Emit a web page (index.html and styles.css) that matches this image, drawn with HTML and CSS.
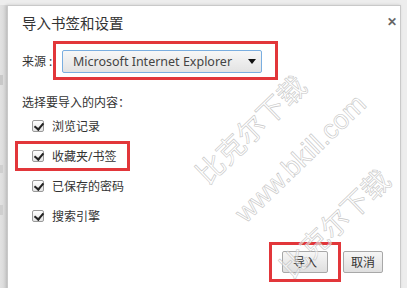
FILE: index.html
```html
<!DOCTYPE html>
<html lang="zh-CN">
<head>
  <meta charset="UTF-8">
  <title>导入书签和设置</title>
  <link rel="stylesheet" href="styles.css">
</head>
<body>

  <div class="backdrop"></div>

  <div class="dialog">
    <span class="close">&#x2715;</span>
    <h1 class="title">导入书签和设置</h1>

    <!-- 来源 -->
    <div class="source">
      <span class="source-label">来源 :</span>
      <div class="mark mark-select">
        <div class="select">
          <span>Microsoft Internet Explorer</span>
          <span class="arrow"></span>
        </div>
      </div>
    </div>

    <p class="section">选择要导入的内容：</p>
    <div class="options">
      <div class="option"><span class="check"></span>浏览记录</div>
      <div class="option mark mark-row"><span class="check"></span>收藏夹/书签</div>
      <div class="option"><span class="check"></span>已保存的密码</div>
      <div class="option"><span class="check"></span>搜索引擎</div>
    </div>

    <div class="actions">
      <div class="mark mark-btn">
        <button type="button">导入</button>
      </div>
      <button type="button" class="cancel">取消</button>
    </div>

    <!-- 水印 -->
    <div class="watermark wm-1">比克尔下载</div>
    <div class="watermark wm-2">www.bkill.com</div>
    <div class="watermark wm-3">比克尔下载</div>
  </div>

</body>
</html>
```

FILE: styles.css
```css
* { box-sizing: border-box; margin: 0; padding: 0; }
body {
  background: #ededed; height: 288px; overflow: hidden; display: flex;
  padding: 5px 6px 0 0;
  font-family: "Noto Sans", "Noto Sans CJK SC", sans-serif; font-size: 12px; color: #333;
}

/* Page behind the dialog */
.backdrop {
  width: 7px;
  background:
    linear-gradient(#c8c8c8, #c8c8c8) 0 70px / 3px 10px no-repeat,
    linear-gradient(#cfcfcf, #cfcfcf) 0 160px / 3px 8px no-repeat,
    linear-gradient(#cfcfcf, #cfcfcf) 0 200px / 3px 10px no-repeat,
    linear-gradient(to right, #e2e2e2, #d6d6d6);
}

/* Dialog */
.dialog {
  flex: 1; height: 300px; background: #fff; border: 1px solid #c9c9c9;
  box-shadow: -1px 0 3px rgba(0,0,0,0.15);
  padding: 7px 17px 0 14px; position: relative; overflow: hidden;
}
.title { font-size: 14.5px; font-weight: normal; line-height: 20px; color: #333; }
.close {
  position: absolute; top: 7px; right: 3px; font-size: 12px; font-weight: bold; color: #666;
}

/* Annotation boxes */
.mark { border: 3px solid #e2363a; }

.source { display: flex; align-items: center; margin-top: 8px; }
.source-label { width: 31px; white-space: nowrap; }
.mark-select { padding: 6px 13px 4px 6px; }
.select {
  width: 200px; height: 23px; border: 1px solid #7aaee0; border-radius: 2px;
  background: linear-gradient(#f7f7f7, #e3e3e3);
  display: flex; align-items: center; justify-content: space-between;
  padding: 0 5px 0 10px; font-size: 12.5px; color: #444;
}
.arrow {
  width: 0; height: 0; border-left: 4.5px solid transparent; border-right: 4.5px solid transparent;
  border-top: 5px solid #111;
}

.section { margin-top: 15px; line-height: 16px; }

.options { padding-left: 10px; }
.option { height: 30px; display: flex; align-items: center; gap: 8px; }
.mark-row { width: 115px; margin-left: -17px; padding-left: 14px; }
.check {
  width: 12px; height: 12px; border: 1px solid #9a9a9a; border-radius: 2px;
  background: linear-gradient(#fdfdfd, #e4e4e4); position: relative;
}
.check::after {
  content: ""; position: absolute; left: 3px; top: 0px; width: 4px; height: 7px;
  border: solid #222; border-width: 0 2px 2px 0; transform: rotate(40deg);
}

/* Buttons */
.actions { display: flex; justify-content: flex-end; align-items: center; margin-top: 11px; }
.mark-btn { padding: 6px 10px; }
button {
  width: 46px; height: 22px; border: 1px solid #a8a8a8; border-radius: 2px;
  background: linear-gradient(#f6f6f6, #dfdfdf); color: #333;
  font-family: "Noto Sans", "Noto Sans CJK SC", sans-serif; font-size: 12px;
}
.cancel { width: 40px; margin-left: 2px; }

/* Watermark */
.watermark {
  position: absolute; white-space: nowrap; line-height: 30px;
  transform: rotate(-44deg); transform-origin: left bottom;
  color: rgba(255,255,255,0.5); -webkit-text-stroke: 0.6px #c6c6c6; font-size: 28px;
  font-family: "Liberation Sans", "Noto Sans CJK SC", sans-serif;
}
.wm-1 { left: 204px; top: 154px; }
.wm-2 { left: 242px; top: 192px; font-size: 27px; }
.wm-3 { left: 288px; top: 248px; }
```
